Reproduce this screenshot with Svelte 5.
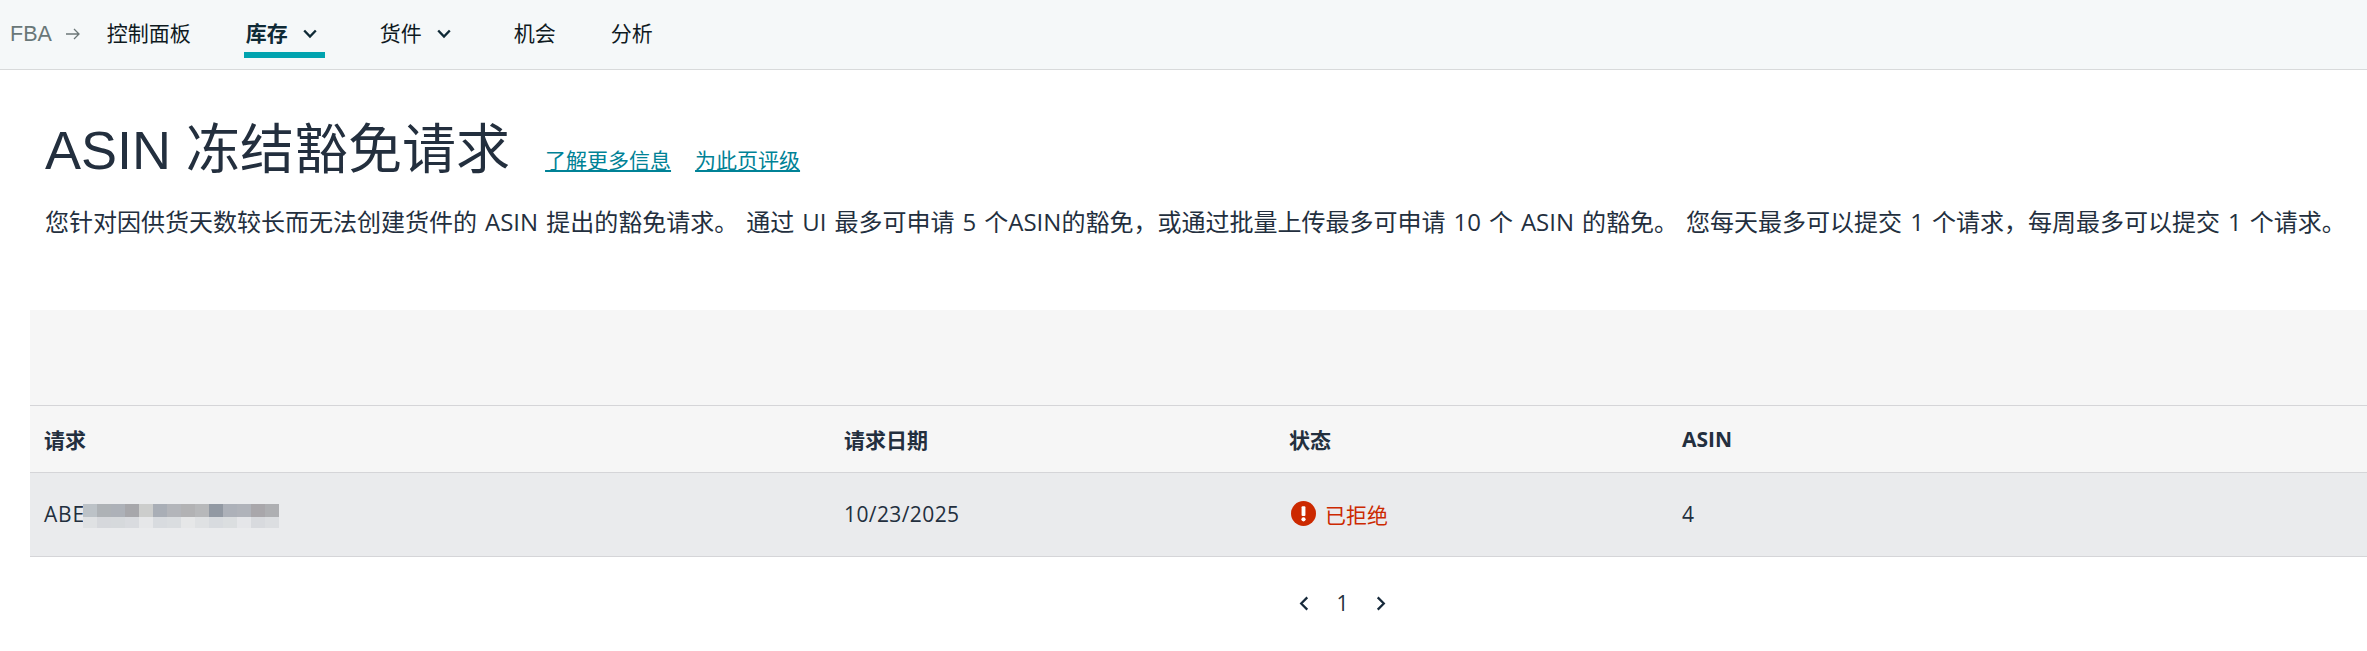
<script>
  const navItems = [
    { label: "控制面板" },
    { label: "库存", caret: true, active: true },
    { label: "货件", caret: true },
    { label: "机会" },
    { label: "分析" }
  ];

  // mosaic over the masked request id
  const blurTop = ["#bcc2c7", "#aeb2b6", "#adb1b8", "#a7a7ab", "#cccdcc", "#a9aeb6", "#b3b5ba", "#b2b2b4", "#b7b8ba", "#9299a3", "#adb1b9", "#b0b3ba", "#a9a7ab", "#aeafb2"];
  const blurBottom = ["#dfe1e3", "#d6d8dc", "#d6d9dc", "#d9dbdf", "#e6e7e9", "#d8dbdf", "#dadde0", "#e6e7e8", "#dfe1e3", "#d8dbdf", "#dbdee0", "#e5e6e9", "#d8dade", "#dcdee1"];
</script>

<header class="topnav">
  <span class="crumb">FBA</span>
  <svg class="arrow" viewBox="0 0 16 14" width="16" height="14">
    <path d="M1 7h13M9 2l5 5-5 5" fill="none" stroke="#6c7778" stroke-width="1.300" />
  </svg>
  <nav class="items">
    {#each navItems as item}
      <div class="item" class:active={item.active} class:has-caret={item.caret}>
        <span>{item.label}</span>
        {#if item.caret}
          <svg viewBox="0 0 14 10" width="14" height="10">
            <path d="M1.200 1.500 7 7.500l5.800-6" fill="none" stroke="#0f2a36" stroke-width="2.400" />
          </svg>
        {/if}
      </div>
    {/each}
  </nav>
</header>

<main>
  <div class="heading">
    <h1>ASIN 冻结豁免请求</h1>
    <a href="#learn">了解更多信息</a>
    <a href="#rate">为此页评级</a>
  </div>
  <p class="desc">您针对因供货天数较长而无法创建货件的 ASIN 提出的豁免请求。 通过 UI 最多可申请 5 个ASIN的豁免，或通过批量上传最多可申请 10 个 ASIN 的豁免。 您每天最多可以提交 1 个请求，每周最多可以提交 1 个请求。</p>
</main>

<section class="table">
  <div class="toolbar"></div>
  <div class="row head">
    <div>请求</div>
    <div>请求日期</div>
    <div>状态</div>
    <div>ASIN</div>
  </div>
  <div class="row body">
    <div class="req">
      <span>ABE</span>
      <div class="mosaic">
        {#each blurTop as c}<i style="background: {c}"></i>{/each}
        {#each blurBottom as c}<i style="background: {c}"></i>{/each}
      </div>
    </div>
    <div class="date">10/23/2025</div>
    <div class="status">
      <svg viewBox="0 0 26 26" width="25" height="25">
        <circle cx="13" cy="13" r="13" fill="#cc2900" />
        <rect x="11" y="5.500" width="4" height="10" rx="1" fill="#fff" />
        <circle cx="13" cy="19" r="2.200" fill="#fff" />
      </svg>
      <span>已拒绝</span>
    </div>
    <div>4</div>
  </div>
</section>

<div class="pager">
  <svg viewBox="0 0 10 16" width="10" height="15">
    <path d="M8.500 1.500 2 8l6.500 6.500" fill="none" stroke="#16293a" stroke-width="2.400" />
  </svg>
  <span>1</span>
  <svg viewBox="0 0 10 16" width="10" height="15">
    <path d="M1.500 1.500 8 8l-6.500 6.500" fill="none" stroke="#16293a" stroke-width="2.400" />
  </svg>
</div>

<style>
  :global(body) {
    margin: 0;
    background: #fff;
    color: #232f3e;
    font-family: "Open Sans", "Noto Sans CJK SC", sans-serif;
    overflow: hidden;
  }

  .topnav {
    display: flex;
    align-items: flex-start;
    height: 69px;
    padding-left: 10px;
    background: #f5f8f9;
    border-bottom: 1px solid #d8dadb;
  }

  .crumb {
    margin-top: 22px;
    font-size: 21.500px;
    font-family: "Liberation Sans", sans-serif;
    color: #697778;
  }

  .arrow {
    margin: 27px 0 0 13px;
  }

  .items {
    display: flex;
    margin-left: 24px;
  }

  .item {
    display: flex;
    align-items: center;
    gap: 15px;
    height: 58px;
    padding: 12px 0 0 2px;
    box-sizing: border-box;
    font-size: 21px;
    color: #0f1a1f;
    margin-right: 53px;
    border-bottom: 6px solid transparent;
  }

  .item.has-caret {
    padding-right: 8px;
  }

  .item.has-caret svg {
    margin-top: 4px;
  }

  .item.active {
    font-weight: 700;
    border-bottom-color: #00a3af;
    color: #0f2a36;
  }

  main {
    padding: 0 0 0 45px;
  }

  .heading {
    display: flex;
    align-items: flex-end;
    margin-top: 42px;
  }

  h1 {
    margin: 0;
    font-size: 54px;
    font-weight: 400;
    line-height: 76px;
    font-family: "Liberation Sans", "Noto Sans CJK SC", sans-serif;
  }

  .heading a {
    margin: 0 0 14px 24px;
    font-size: 21px;
    line-height: 28px;
    color: #008296;
    text-decoration: underline;
  }

  .heading a:first-of-type {
    margin-left: 35px;
  }

  .desc {
    margin: 17px 0 0;
    font-size: 24px;
    line-height: 34px;
    white-space: nowrap;
    word-spacing: 1.800px;
  }

  .table {
    margin: 71px 0 0 30px;
  }

  .toolbar {
    height: 95px;
    background: #f6f6f6;
  }

  .row {
    display: grid;
    grid-template-columns: 800px 445px 393px 1fr;
    align-items: center;
    padding-left: 14px;
    font-size: 21px;
    border-top: 1px solid #d5d5d8;
  }

  .row.head {
    height: 66px;
    background: #f6f6f6;
    font-weight: 700;
  }

  .row.body {
    height: 83px;
    box-sizing: content-box;
    background: #eaebed;
    border-bottom: 1px solid #d5d5d8;
  }

  .row.body > div {
    margin-bottom: 2px;
  }

  .req {
    display: flex;
    align-items: center;
  }

  .req span {
    letter-spacing: 0.800px;
  }

  .mosaic {
    display: grid;
    grid-template-columns: repeat(14, 14px);
    grid-template-rows: 13px 11px;
    margin: 4px 0 0 -2px;
  }

  .date {
    letter-spacing: 0.400px;
  }

  .status {
    display: flex;
    align-items: center;
    gap: 9px;
    margin-left: 2px;
    color: #cc2900;
  }

  .pager {
    display: flex;
    align-items: center;
    justify-content: center;
    gap: 27px;
    margin-top: 32px;
    padding-left: 318px;
    font-size: 21px;
  }
</style>
